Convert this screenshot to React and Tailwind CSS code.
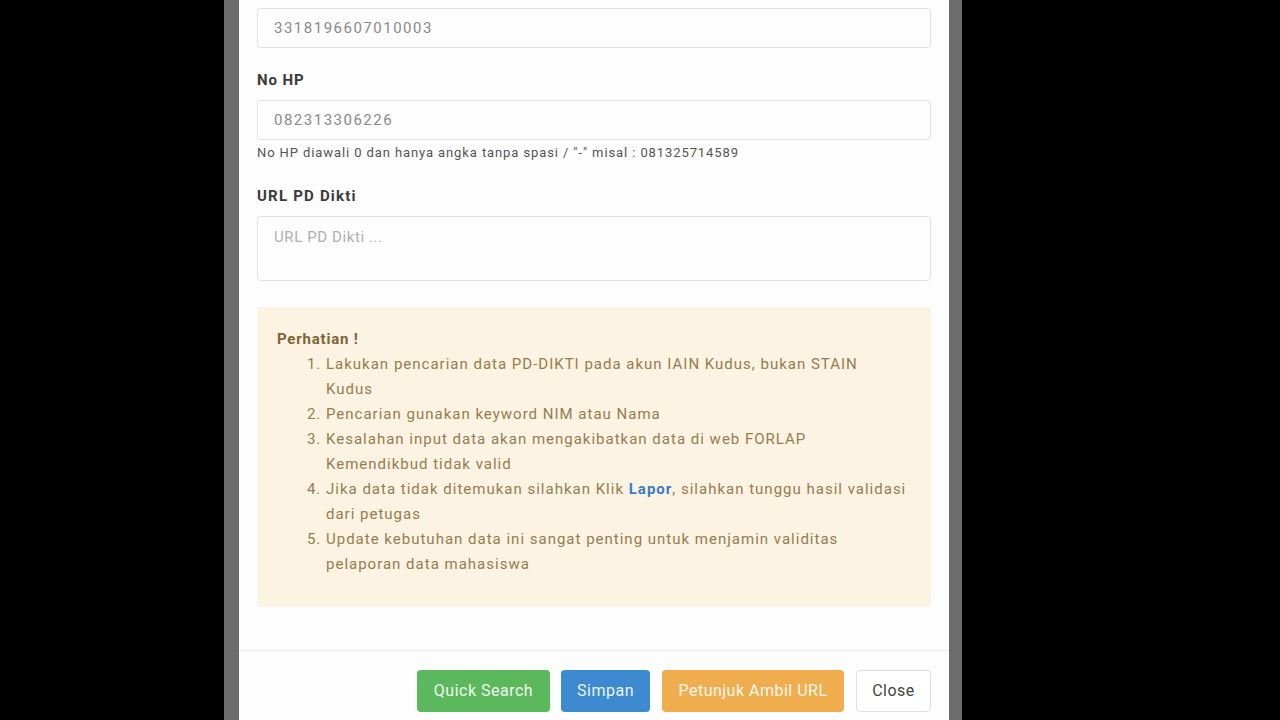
import React from 'react';

const notes = [
  <>Lakukan pencarian data PD-DIKTI pada akun IAIN Kudus, bukan STAIN<br />Kudus</>,
  <>Pencarian gunakan keyword NIM atau Nama</>,
  <>Kesalahan input data akan mengakibatkan data di web FORLAP<br />Kemendikbud tidak valid</>,
  <>
    Jika data tidak ditemukan silahkan Klik{' '}
    <span className="font-bold text-[#3a7cc4]">Lapor</span>, silahkan tunggu hasil validasi
    <br />dari petugas
  </>,
  <>Update kebutuhan data ini sangat penting untuk menjamin validitas<br />pelaporan data mahasiswa</>,
];

const App = () => {
  return (
    <div className="h-[720px] w-full bg-black overflow-hidden font-['Roboto',sans-serif]">
      <div className="ml-[224px] w-[738px] h-full bg-[#6c6c6c] px-[15px] pr-[13px]">
        <div className="h-full bg-[#fdfdfd] flex flex-col">
          {/* Form body */}
          <div className="px-[18px] pt-[8px]">
            <div className="h-[40px] border border-[#e2e2e2] rounded-[4px] px-4 flex items-center text-[15px] tracking-[1.5px] text-[#8a8a8a]">
              3318196607010003
            </div>

            <label className="block mt-[22px] mb-[10px] leading-5 text-[15px] tracking-[0.9px] font-bold text-[#3a3a3a]">No HP</label>
            <div className="h-[40px] border border-[#e2e2e2] rounded-[4px] px-4 flex items-center text-[15px] tracking-[1.5px] text-[#8a8a8a]">
              082313306226
            </div>
            <p className="mt-[4px] text-[13px] leading-[18px] text-[#555] tracking-[0.9px]">
              No HP diawali 0 dan hanya angka tanpa spasi / "-" misal : 081325714589
            </p>

            <label className="block mt-[24px] mb-[10px] leading-5 text-[15px] tracking-[1.2px] font-bold text-[#3a3a3a]">URL PD Dikti</label>
            <div className="h-[65px] border border-[#e2e2e2] rounded-[4px] px-4 pt-[10px] text-[15px] leading-5 tracking-[0.6px] text-[#b0b0b0]">
              URL PD Dikti ...
            </div>

            {/* Warning box */}
            <div className="mt-[26px] h-[300px] bg-[#fcf3e2] rounded-[4px] px-[20px] pt-[20px] text-[15px] leading-[25px] tracking-[1px] text-[#957d4f]">
              <div className="font-bold text-[#7f6435] tracking-[0.8px]">Perhatian !</div>
              <ol className="list-decimal pl-[49px]">
                {notes.map((n, i) => (
                  <li key={i} className="whitespace-nowrap">{n}</li>
                ))}
              </ol>
            </div>
          </div>

          {/* Footer */}
          <div className="mt-[43px] border-t border-[#ececec] px-[18px] pt-[19px] flex justify-end text-[16px] tracking-[0.5px]">
            <button className="h-[42px] w-[133px] rounded-[4px] bg-[#5cb85c] text-white/90">Quick Search</button>
            <button className="ml-[11px] h-[42px] w-[89px] rounded-[4px] bg-[#3d8ad1] text-white/90">Simpan</button>
            <button className="ml-[12px] h-[42px] w-[182px] rounded-[4px] bg-[#f0ad4e] text-white/90">Petunjuk Ambil URL</button>
            <button className="ml-[12px] h-[42px] w-[75px] rounded-[4px] bg-white border border-[#dedede] text-[#444]">Close</button>
          </div>
        </div>
      </div>
    </div>
  );
};

export default App;
